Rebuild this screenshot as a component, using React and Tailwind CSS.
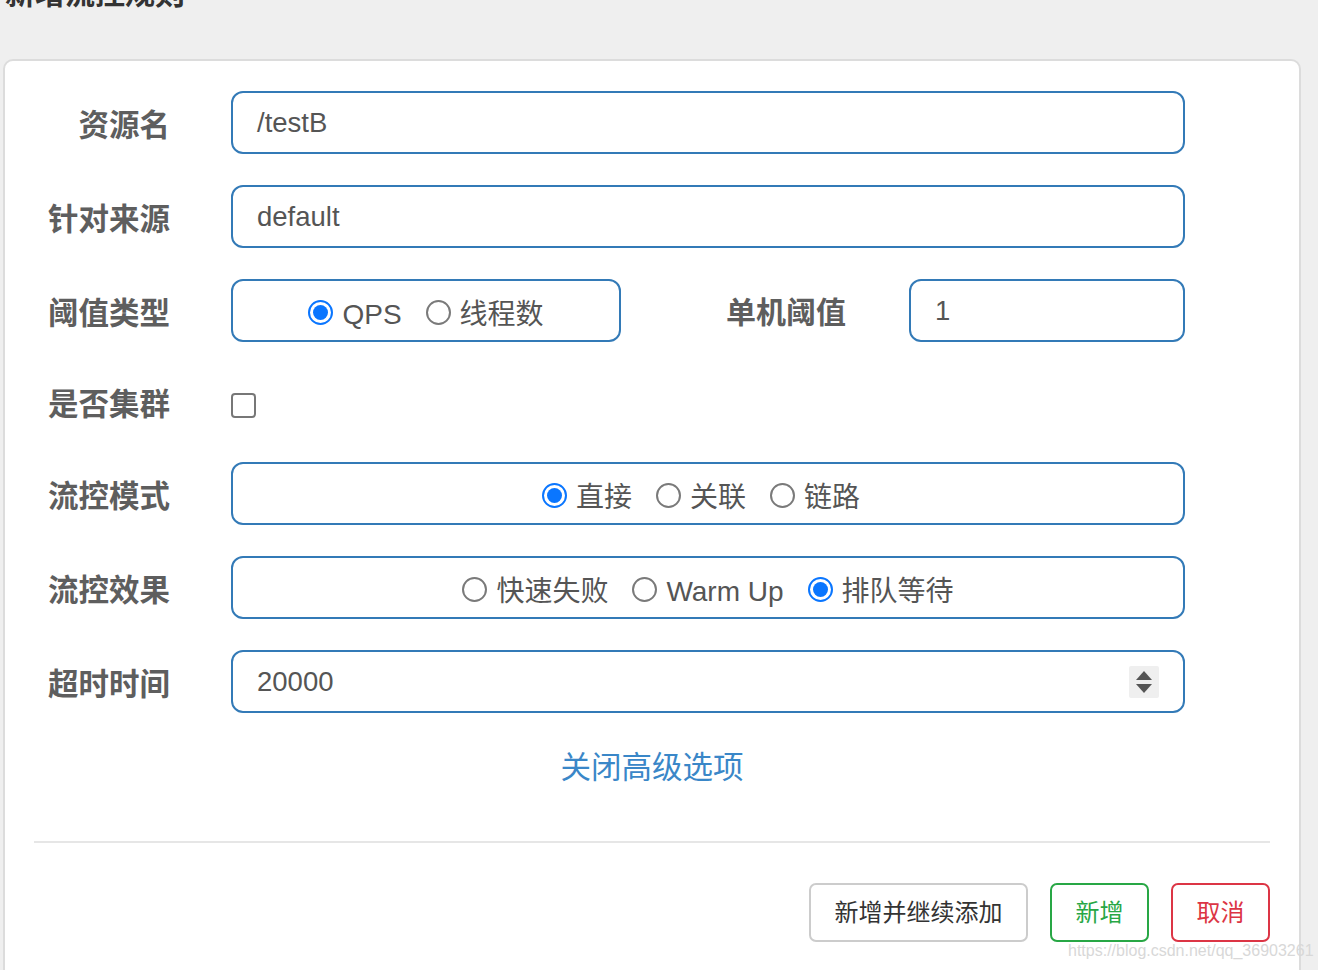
import React from "react";

const CJK = "font-['Liberation_Sans','Noto_Sans_CJK_SC',sans-serif]";

function Radio({ checked, label }) {
  return (
    <label className="flex items-center gap-[9px] mt-[4px]">
      {checked ? (
        <span className="w-[25px] h-[25px] rounded-full border-[2px] border-[#0a76ff] bg-white flex items-center justify-center">
          <span className="w-[15px] h-[15px] rounded-full bg-[#0a76ff]" />
        </span>
      ) : (
        <span className="w-[25px] h-[25px] rounded-full border-[2px] border-[#7a7a7a] bg-white" />
      )}
      <span className="text-[28px] leading-none text-[#555] mt-[5px]">{label}</span>
    </label>
  );
}

function Row({ label, h = "h-[63px]", children }) {
  return (
    <div className={`flex items-center ${h}`}>
      <div className="w-[165px] mt-[5px] text-right text-[30.5px] font-bold text-[#5e5e5e] leading-none shrink-0">{label}</div>
      <div className="ml-[61px] flex-1 flex items-center">{children}</div>
    </div>
  );
}

function Field({ value, className = "w-[954px]", children }) {
  return (
    <div className={`${className} h-[63px] border-2 border-[#337ab7] rounded-[12px] flex items-center px-[24px] text-[27.5px] text-[#555]`}>
      <span className="flex-1">{value}</span>
      {children}
    </div>
  );
}

function RadioBox({ className = "w-[954px]", children }) {
  return (
    <div className={`${className} h-[63px] border-2 border-[#337ab7] rounded-[12px] flex items-center justify-center gap-[24px]`}>
      {children}
    </div>
  );
}

export default function App() {
  return (
    <div className={`h-[970px] overflow-hidden bg-[#efefef] relative flex flex-col ${CJK}`}>
      <div className="h-[59px] shrink-0 flex flex-col">
        <div className="-mt-[21px] ml-[5px] text-[30px] leading-[30px] font-bold text-[#333]">新增流控规则</div>
      </div>
      <div className="ml-[3px] w-[1298px] h-[960px] shrink-0 bg-white border-2 border-[#dcdcdc] rounded-[10px] pt-[30px]">
        <div className="flex flex-col gap-[31px]">
          <Row label="资源名">
            <Field value="/testB" />
          </Row>
          <Row label="针对来源">
            <Field value="default" />
          </Row>
          <Row label="阈值类型">
            <RadioBox className="w-[390px]">
              <Radio checked label="QPS" />
              <Radio label="线程数" />
            </RadioBox>
            <div className="w-[288px] pl-[105px] mt-[5px] text-left text-[30px] font-bold text-[#5e5e5e] leading-none">单机阈值</div>
            <Field value="1" className="w-[276px]" />
          </Row>
          <Row label="是否集群" h="h-[58px]">
            <span className="w-[25px] h-[25px] mt-[6px] rounded-[4px] border-2 border-[#777] bg-white" />
          </Row>
          <Row label="流控模式">
            <RadioBox className="w-[954px] pr-[14px]">
              <Radio checked label="直接" />
              <Radio label="关联" />
              <Radio label="链路" />
            </RadioBox>
          </Row>
          <Row label="流控效果">
            <RadioBox>
              <Radio label="快速失败" />
              <Radio label="Warm Up" />
              <Radio checked label="排队等待" />
            </RadioBox>
          </Row>
          <Row label="超时时间">
            <Field value="20000">
              <div className="w-[30px] h-[32px] bg-[#efefef] rounded-[2px] flex flex-col items-center justify-center gap-[4px]">
                <svg width="16" height="9" viewBox="0 0 16 9"><path d="M8 0 L16 9 L0 9 Z" fill="#555" /></svg>
                <svg width="16" height="9" viewBox="0 0 16 9"><path d="M0 0 L16 0 L8 9 Z" fill="#555" /></svg>
              </div>
            </Field>
          </Row>
        </div>
        <div className="mt-[37px] text-center text-[30.5px] leading-[34px] text-[#3a87c8]">关闭高级选项</div>
        <div className="mt-[57px] mx-[29px] h-[2px] bg-[#e6e6e6]" />
        <div className="mt-[40px] mr-[29px] flex justify-end gap-[22px]">
          <button className="w-[219px] h-[59px] border-2 border-[#ccc] rounded-[7px] text-[24px] text-[#333] bg-white">新增并继续添加</button>
          <button className="w-[99px] h-[59px] border-2 border-[#28a745] rounded-[7px] text-[24px] text-[#28a745] bg-white">新增</button>
          <button className="w-[99px] h-[59px] border-2 border-[#dc3545] rounded-[7px] text-[24px] text-[#dc3545] bg-white">取消</button>
        </div>
      </div>
      <div className="absolute left-[1068px] top-[941px] text-[16px] leading-[20px] text-[#d8d8d8] font-['Liberation_Sans',sans-serif]">https://blog.csdn.net/qq_36903261</div>
    </div>
  );
}
